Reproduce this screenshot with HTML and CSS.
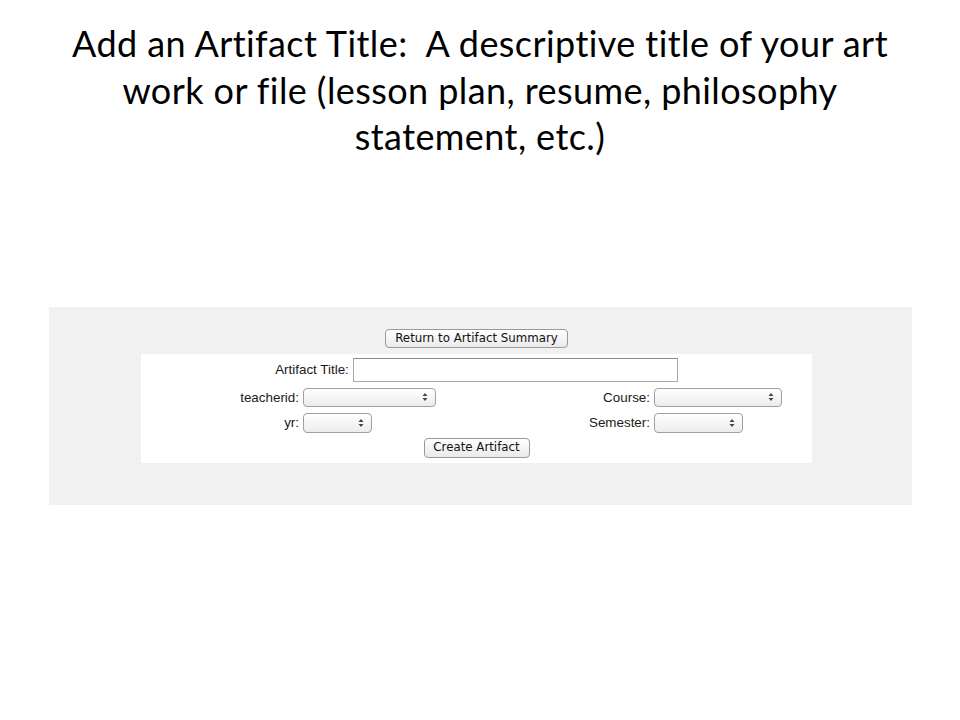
FILE: index.html
```html
<!DOCTYPE html>
<html>
<head>
<meta charset="utf-8">
<link rel="stylesheet" href="styles.css">
</head>
<body>
<h1 class="title">Add an Artifact Title:&nbsp; A descriptive title of your art<br>work or file (lesson plan, resume, philosophy<br>statement, etc.)</h1>
<div class="panel">
  <div class="top"><button class="btn btn-return">Return to Artifact Summary</button></div>
  <div class="form">
    <div class="row-title">
      <label class="lbl">Artifact Title:</label>
      <span class="input"></span>
    </div>
    <div class="grid">
      <label class="lbl cell-r">teacherid:</label>
      <div><span class="select s-teacher"><svg width="6" height="10" viewBox="0 0 6 10"><path d="M3 1 L5.5 4 H0.5 Z M3 9 L5.5 6 H0.5 Z" fill="#444"/></svg></span></div>
      <label class="lbl cell-r">Course:</label>
      <div><span class="select s-course"><svg width="6" height="10" viewBox="0 0 6 10"><path d="M3 1 L5.5 4 H0.5 Z M3 9 L5.5 6 H0.5 Z" fill="#444"/></svg></span></div>
      <label class="lbl cell-r">yr:</label>
      <div><span class="select s-yr"><svg width="6" height="10" viewBox="0 0 6 10"><path d="M3 1 L5.5 4 H0.5 Z M3 9 L5.5 6 H0.5 Z" fill="#444"/></svg></span></div>
      <label class="lbl cell-r">Semester:</label>
      <div><span class="select s-sem"><svg width="6" height="10" viewBox="0 0 6 10"><path d="M3 1 L5.5 4 H0.5 Z M3 9 L5.5 6 H0.5 Z" fill="#444"/></svg></span></div>
    </div>
    <div class="row-btn"><button class="btn btn-create">Create Artifact</button></div>
  </div>
</div>
</body>
</html>
```
FILE: styles.css
```css
html, body {
  margin: 0;
  padding: 0;
  background: #ffffff;
}
body {
  width: 960px;
  height: 720px;
  overflow: hidden;
}
.title {
  margin: 20px 0 0;
  width: 960px;
  font-family: Lato, "Open Sans", sans-serif;
  font-weight: normal;
  font-size: 36px;
  letter-spacing: 0.42px;
  font-variant-ligatures: none;
  line-height: 46.5px;
  text-align: center;
  white-space: nowrap;
  color: #000;
}
.panel {
  margin: 147px 0 0 49px;
  width: 863px;
  height: 198px;
  box-sizing: border-box;
  background: #f1f1f1;
  padding-top: 22px;
  padding-left: 92px;
}
.top {
  width: 671px;
  display: flex;
  justify-content: center;
}
.btn {
  font-family: "DejaVu Sans", sans-serif;
  font-size: 11.8px;
  color: #111;
  background: linear-gradient(#ffffff, #eaeaea);
  border: 1px solid #9a9a9a;
  border-radius: 4px;
  padding: 0;
  height: 19px;
  box-sizing: border-box;
  line-height: 17px;
}
.btn-return { width: 183px; }
.btn-create { width: 106px; height: 20px; }
.form {
  margin-top: 6px;
  width: 671px;
  height: 109px;
  box-sizing: border-box;
  background: #ffffff;
  padding-top: 4px;
}
.lbl {
  font-family: "Liberation Sans", Arial, sans-serif;
  font-size: 13.4px;
  color: #1a1a1a;
}
.row-title {
  display: flex;
  justify-content: center;
  align-items: center;
  gap: 4px;
  height: 24px;
}
.input {
  display: block;
  width: 325px;
  height: 24px;
  box-sizing: border-box;
  border: 1px solid #a8a8a8;
  border-top-color: #8c8c8c;
  background: #fff;
}
.grid {
  margin-top: 6px;
  display: grid;
  grid-template-columns: 162px 189px 162px 158px;
  grid-template-rows: 19px 20px;
  row-gap: 6px;
  align-items: center;
}
.cell-r {
  text-align: right;
  padding-right: 4px;
}
.grid > div {
  display: flex;
  align-items: center;
}
.select {
  display: flex;
  justify-content: flex-end;
  align-items: center;
  box-sizing: border-box;
  height: 19px;
  padding-right: 7px;
  border: 1px solid #a0a0a0;
  border-radius: 4px;
  background: linear-gradient(#ffffff, #ececec);
}
.s-teacher { width: 133px; }
.s-course { width: 128px; }
.s-yr { width: 69px; height: 20px; }
.s-sem { width: 89px; height: 20px; }
.row-btn {
  margin-top: 5px;
  display: flex;
  justify-content: center;
}
```
